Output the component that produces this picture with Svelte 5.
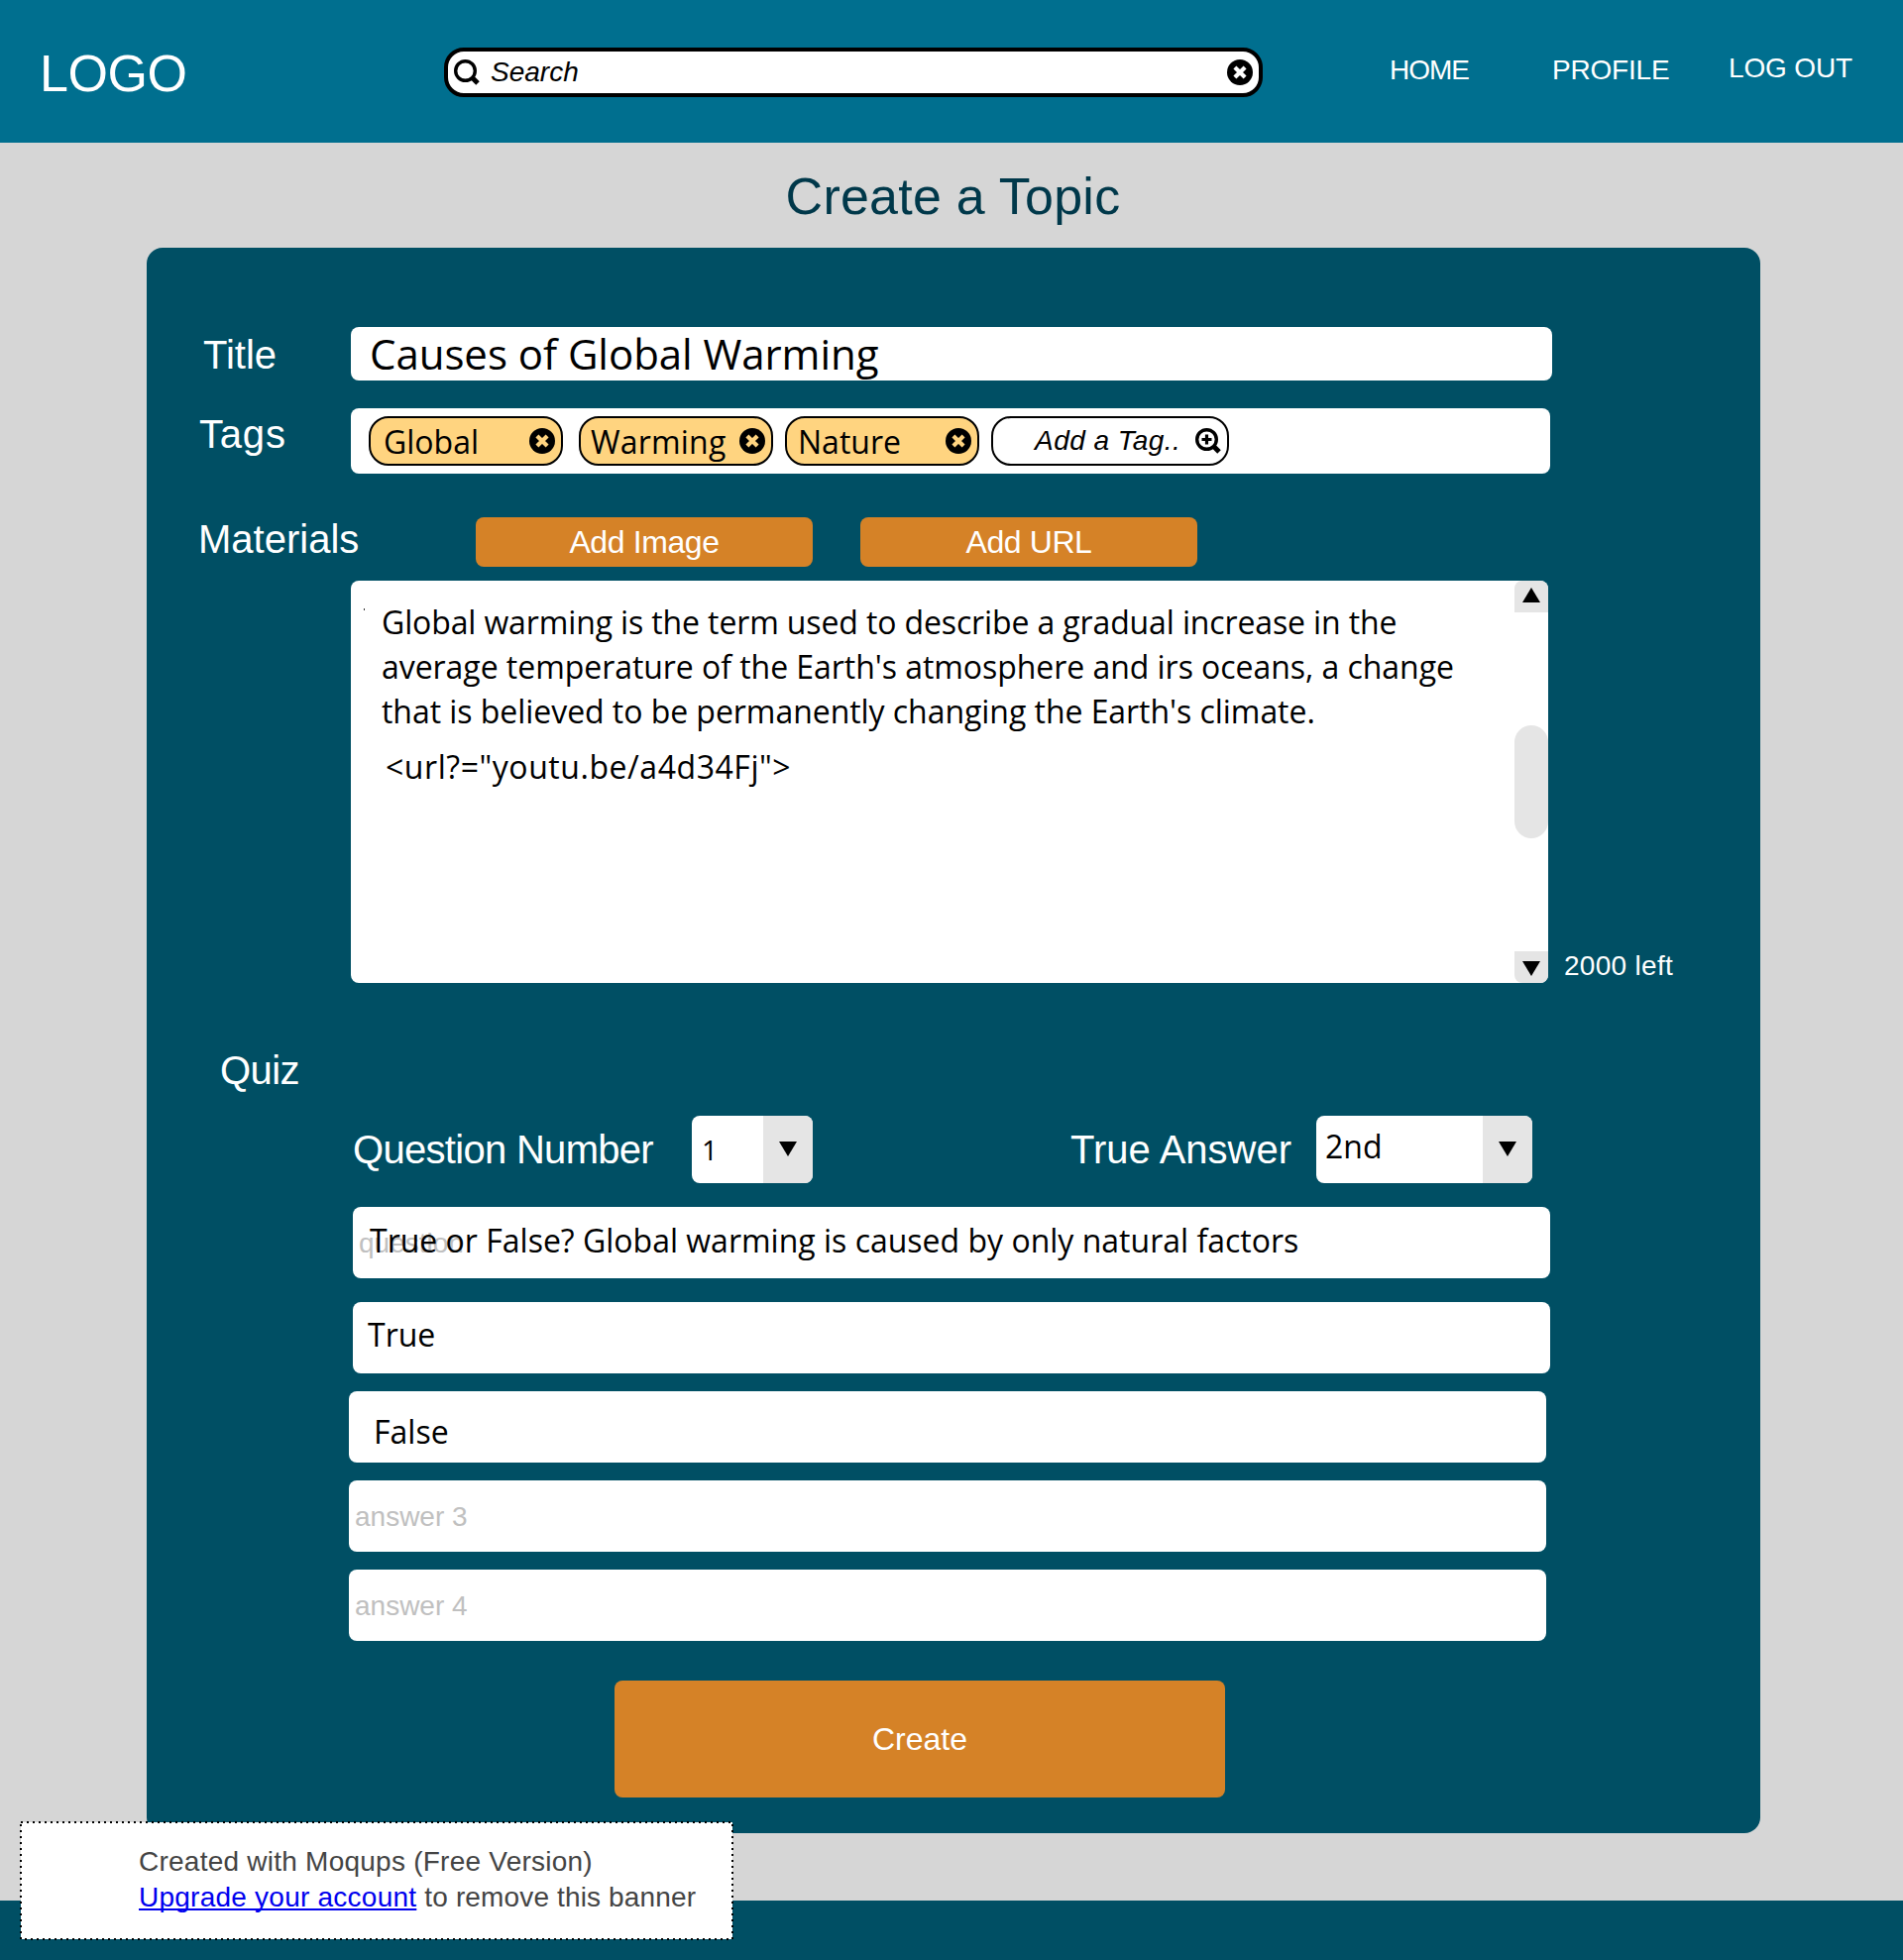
<script>
  const tags = [
    { name: 'Global', kind: 'first' },
    { name: 'Warming', kind: 'wide' },
    { name: 'Nature', kind: 'plain' }
  ];

  const answers = [
    { value: 'True', kind: 'one' },
    { value: 'False', kind: 'two' },
    { placeholder: 'answer 3', kind: 'blank' },
    { placeholder: 'answer 4', kind: 'blank' }
  ];
</script>

{#snippet clearIcon()}
  <svg class="icon" width="26" height="26" viewBox="0 0 26 26">
    <circle cx="13" cy="13" r="13" fill="#000" />
    <path d="M7.9 7.9L18.1 18.1M18.1 7.9L7.9 18.1" fill="none" stroke="currentColor" stroke-width="4.2" />
  </svg>
{/snippet}

{#snippet lens(plus)}
  <svg class="icon" width="26" height="26" viewBox="0 0 26 26" fill="none" stroke="#000">
    <circle cx="11.5" cy="11.5" r="9.8" stroke-width="3.4" />
    <path d="M18.6 18.6L24 24" stroke-width="5" />
    {#if plus}<path d="M6.5 11.5H16.5M11.5 6.5V16.5" stroke-width="3.2" />{/if}
  </svg>
{/snippet}

{#snippet arrow(up)}
  <svg class="arrow" width="18" height="15" viewBox="0 0 18 15">
    <path d={up ? 'M9 0L18 15H0Z' : 'M9 15L18 0H0Z'} fill="#000" />
  </svg>
{/snippet}

<div class="page">
  <header>
    <div class="logo">LOGO</div>
    <div class="search">
      {@render lens(false)}
      <span class="query">Search</span>
      {@render clearIcon()}
    </div>
    <nav>
      <span class="home">HOME</span>
      <span class="profile">PROFILE</span>
      <span class="logout">LOG OUT</span>
    </nav>
  </header>

  <main>
    <h1>Create a Topic</h1>

    <section class="panel">
      <div class="row title-row">
        <div class="label title-label">Title</div>
        <div class="field title-field">Causes of Global Warming</div>
      </div>

      <div class="row tags-row">
        <div class="label tags-label">Tags</div>
        <div class="field tags-field">
          {#each tags as tag}
            <div class="chip {tag.kind}">
              <span>{tag.name}</span>
              {@render clearIcon()}
            </div>
          {/each}
          <div class="add-tag">
            <span>Add a Tag..</span>
            {@render lens(true)}
          </div>
        </div>
      </div>

      <div class="row materials-row">
        <div class="label materials-label">Materials</div>
        <div class="button small">Add Image</div>
        <div class="button small">Add URL</div>
      </div>

      <div class="row editor-row">
        <div class="field editor">
          <i class="caret"></i>
          <div class="body">
            <p class="l1">Global warming is the term used to describe a gradual increase in the</p>
            <p>average temperature of the Earth's atmosphere and irs oceans, a change</p>
            <p>that is believed to be permanently changing the Earth's climate.</p>
            <p class="url">{'<url?="youtu.be/a4d34Fj">'}</p>
          </div>
          <div class="scroll">
            <div class="step top">{@render arrow(true)}</div>
            <div class="thumb"></div>
            <div class="step bottom">{@render arrow(false)}</div>
          </div>
        </div>
        <div class="count">2000 left</div>
      </div>

      <div class="label quiz-label">Quiz</div>

      <div class="row selects">
        <div class="label number-label">Question Number</div>
        <div class="select number">
          <span>1</span>
          <div class="drop">{@render arrow(false)}</div>
        </div>
        <div class="label answer-label">True Answer</div>
        <div class="select answer">
          <span>2nd</span>
          <div class="drop">{@render arrow(false)}</div>
        </div>
      </div>

      <div class="field line question">
        <span class="ghost">question</span>
        <span class="over">True or False? Global warming is caused by only natural factors</span>
      </div>
      {#each answers as a}
        <div class="field line {a.kind}">{a.value ?? a.placeholder}</div>
      {/each}

      <div class="button create">Create</div>
    </section>
  </main>

  <footer></footer>

  <aside>
    <svg class="outline" width="720" height="120" viewBox="0 0 720 120">
      <rect x="1" y="1" width="718" height="118" fill="#fff" stroke="#000" stroke-width="2" stroke-dasharray="2 4" />
    </svg>
    <div class="notice">
      <div>Created with Moqups (Free Version)</div>
      <div><span class="link">Upgrade your account</span> <span class="rest">to remove this banner</span></div>
    </div>
  </aside>
</div>

<style>
  :global(body) { margin: 0; }

  .page {
    position: relative;
    width: 1920px;
    height: 1978px;
    overflow: hidden;
    display: flex;
    flex-direction: column;
    background: #d6d6d6;
    font-family: "Liberation Sans", Arial, sans-serif;
    color: #fff;
    white-space: nowrap;
  }
  .page * { box-sizing: border-box; }
  svg { display: block; flex: none; }

  header {
    display: flex;
    align-items: flex-start;
    height: 144px;
    padding-left: 40px;
    background: #006f8f;
  }
  .logo {
    width: 408px;
    margin-top: 44px;
    font-size: 52px;
    line-height: 60px;
    letter-spacing: -0.4px;
  }
  .search {
    display: flex;
    align-items: center;
    width: 826px;
    height: 50px;
    margin-top: 48px;
    padding: 0 6px;
    border: 4px solid #000;
    border-radius: 20px;
    background: #fff;
    color: #fff;
  }
  .query {
    flex: 1;
    padding-left: 11px;
    color: #000;
    font-size: 28px;
    font-style: italic;
    line-height: 40px;
    padding-bottom: 1px;
  }
  nav {
    display: grid;
    grid-template-columns: 164px 178px auto;
    margin: 57px 0 0 128px;
    font-size: 28px;
    line-height: 28px;
  }
  .home { letter-spacing: -1px; }
  .profile { letter-spacing: -0.2px; }
  .logout { margin-top: -2px; letter-spacing: -0.15px; }

  main { height: 1774px; }
  h1 {
    margin: 24px 0 22px;
    padding-left: 3px;
    text-align: center;
    font-size: 52px;
    font-weight: 400;
    line-height: 60px;
    letter-spacing: 0.25px;
    color: #00384a;
  }

  .panel {
    width: 1628px;
    height: 1600px;
    margin-left: 148px;
    padding-top: 80px;
    border-radius: 16px;
    background: #004f64;
  }
  .row { display: flex; align-items: flex-start; }
  .label { font-size: 40px; line-height: 40px; }
  .field {
    display: flex;
    align-items: center;
    border-radius: 8px;
    background: #fff;
    color: #000;
    font-family: "Open Sans", sans-serif;
    font-size: 32px;
  }
  .button {
    display: flex;
    align-items: center;
    justify-content: center;
    border-radius: 8px;
    background: #d58227;
    font-size: 32px;
  }

  .title-label { width: 206px; padding: 8px 0 0 57px; }
  .title-field {
    width: 1212px;
    height: 54px;
    padding: 0 0 1px 19px;
    font-size: 42px;
    letter-spacing: -0.05px;
  }

  .tags-row { margin-top: 28px; }
  .tags-label { width: 206px; padding: 6px 0 0 53px; letter-spacing: 0.8px; }
  .tags-field { width: 1210px; height: 66px; padding-left: 18px; }
  .chip, .add-tag {
    display: flex;
    align-items: center;
    justify-content: space-between;
    height: 50px;
    margin-right: 12px;
    border: 2px solid #000;
    border-radius: 20px;
  }
  .chip {
    width: 196px;
    padding: 0 6px 0 10px;
    background: #ffd480;
    color: #ffd480;
  }
  .chip span { color: #000; }
  .chip.first { margin-right: 16px; padding-left: 13px; }
  .chip.plain { padding-left: 11px; }
  .chip.wide { letter-spacing: 0.2px; }
  .add-tag {
    width: 240px;
    padding: 0 6px 0 42px;
    font-family: "Liberation Sans", Arial, sans-serif;
    font-size: 28px;
    font-style: italic;
    letter-spacing: 0.45px;
  }

  .materials-row { margin-top: 44px; }
  .materials-label { width: 332px; padding: 2px 0 0 52px; }
  .small {
    width: 340px;
    height: 50px;
    margin-right: 48px;
    letter-spacing: -0.4px;
  }

  .editor-row { margin: 14px 0 0 206px; align-items: flex-end; }
  .editor {
    position: relative;
    width: 1208px;
    height: 406px;
    align-items: stretch;
    justify-content: space-between;
  }
  .caret {
    position: absolute;
    left: 13px;
    top: 28px;
    width: 1px;
    height: 2px;
    background: #333;
  }
  .body { padding: 19px 0 0 31px; line-height: 45px; }
  .body p { margin: 0; letter-spacing: -0.05px; }
  .body .l1 { letter-spacing: -0.13px; }
  .body .url { margin: 11px 0 0 4px; letter-spacing: 0.55px; }
  .scroll {
    display: flex;
    flex-direction: column;
    justify-content: space-between;
    width: 34px;
  }
  .step {
    display: flex;
    justify-content: center;
    height: 32px;
    background: #e5e5e5;
  }
  .top { border-radius: 8px 8px 0 0; padding-top: 7px; }
  .bottom { border-radius: 0 0 8px 8px; padding-top: 10px; }
  .thumb { height: 114px; border-radius: 17px; background: #e5e5e5; }
  .count {
    padding: 0 0 3px 16px;
    font-size: 28px;
    line-height: 28px;
    letter-spacing: 0.3px;
  }

  .quiz-label { margin: 68px 0 0 74px; letter-spacing: -0.55px; }

  .selects { margin: 26px 0 24px 208px; }
  .number-label { width: 342px; padding-top: 14px; letter-spacing: -0.7px; }
  .answer-label { width: 248px; margin-left: 260px; padding-top: 14px; letter-spacing: 0; }
  .select {
    display: flex;
    align-items: center;
    justify-content: space-between;
    height: 68px;
    padding-left: 9px;
    overflow: hidden;
    border-radius: 8px;
    background: #fff;
    color: #000;
    font-family: "Open Sans", sans-serif;
  }
  .number { width: 122px; padding-left: 10px; font-size: 28px; }
  .number span { padding-bottom: 1px; }
  .answer { width: 218px; font-size: 32px; }
  .answer span { padding-bottom: 8px; }
  .drop {
    display: flex;
    justify-content: center;
    width: 50px;
    height: 68px;
    padding-top: 26px;
    background: #e5e5e5;
  }

  .line { width: 1208px; height: 72px; margin: 0 0 18px 204px; }
  .question { position: relative; margin: 0 0 24px 208px; padding: 0 0 5px 17px; }
  .ghost {
    position: absolute;
    left: 6px;
    top: 17px;
    color: #c0c0c0;
    font-family: "Liberation Sans", Arial, sans-serif;
    font-size: 28px;
    line-height: 40px;
    letter-spacing: 0;
  }
  .over { position: relative; }
  .one { margin-left: 208px; padding: 0 0 7px 15px; }
  .two { padding: 8px 0 0 25px; }
  .blank {
    padding: 2px 0 0 6px;
    color: #c0c0c0;
    font-family: "Liberation Sans", Arial, sans-serif;
    font-size: 28px;
  }

  .create { width: 616px; height: 118px; margin: 40px 0 0 472px; }

  footer { height: 60px; background: #004f64; }

  aside {
    position: absolute;
    left: 20px;
    top: 1838px;
    width: 720px;
    height: 120px;
  }
  .outline { position: absolute; inset: 0; }
  .notice {
    position: relative;
    padding: 23px 0 0 120px;
    color: #444;
    font-size: 28px;
    line-height: 36px;
    letter-spacing: 0.24px;
  }
  .link {
    color: #00e;
    letter-spacing: 0.24px;
    text-decoration: underline;
    text-decoration-thickness: 2px;
    text-underline-offset: 2px;
    text-decoration-skip-ink: none;
  }
  .rest { letter-spacing: 0.14px; }
</style>
